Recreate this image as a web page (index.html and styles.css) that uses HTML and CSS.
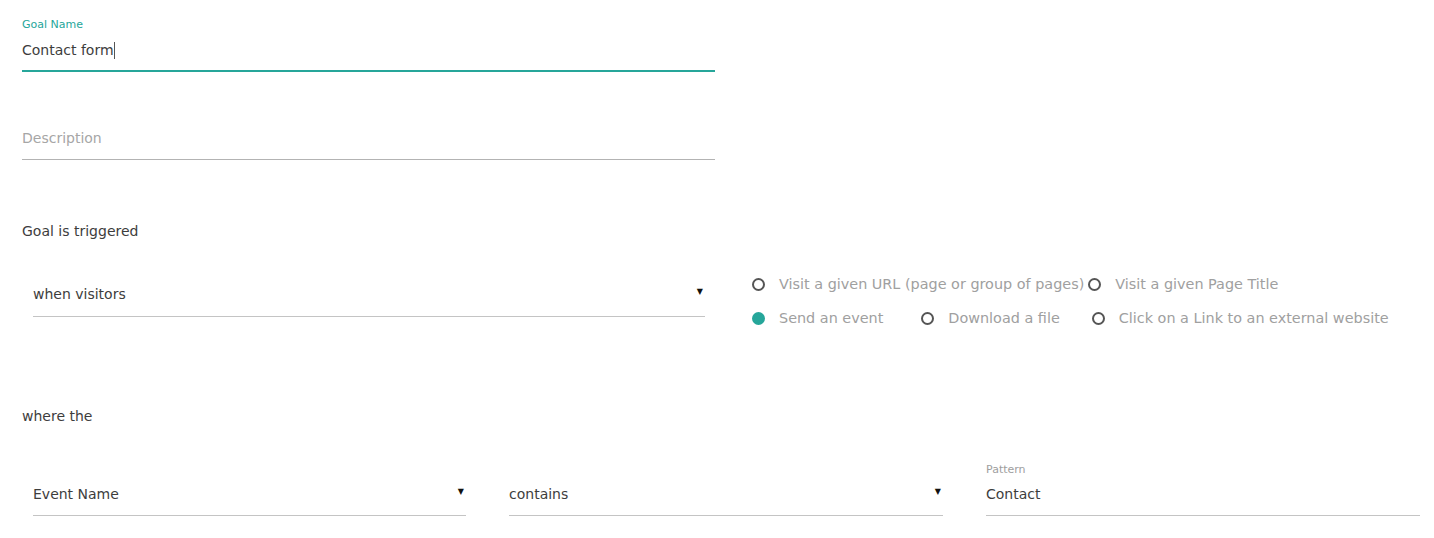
FILE: index.html
```html
<!DOCTYPE html>
<html>
<head>
<meta charset="utf-8">
<link rel="stylesheet" href="styles.css">
</head>
<body>
<div class="page">
  <div class="field field-name">
    <label class="flabel active">Goal Name</label>
    <div class="fvalue">Contact form<span class="caret"></span></div>
    <div class="line focus"></div>
  </div>

  <div class="field field-desc">
    <div class="fvalue placeholder">Description</div>
    <div class="line"></div>
  </div>

  <div class="section-title trig">Goal is triggered</div>

  <div class="trigger-row">
    <div class="select wide">
      <span class="sval">when visitors</span>
      <span class="arrow">▼</span>
    </div>
    <div class="radios">
      <div class="rrow">
        <span class="radio r-url"><span class="dot"></span>Visit a given URL (page or group of pages)</span>
        <span class="radio"><span class="dot"></span>Visit a given Page Title</span>
      </div>
      <div class="rrow">
        <span class="radio r-send"><span class="dot on"></span>Send an event</span>
        <span class="radio r-dl"><span class="dot"></span>Download a file</span>
        <span class="radio"><span class="dot"></span>Click on a Link to an external website</span>
      </div>
    </div>
  </div>

  <div class="section-title where">where the</div>

  <div class="cond-row">
    <div class="select">
      <span class="sval">Event Name</span>
      <span class="arrow">▼</span>
    </div>
    <div class="select">
      <span class="sval">contains</span>
      <span class="arrow">▼</span>
    </div>
    <div class="pattern">
      <label class="flabel">Pattern</label>
      <div class="select ptext">
        <span class="sval">Contact</span>
      </div>
    </div>
  </div>
</div>
</body>
</html>
```
FILE: styles.css
```css
* { box-sizing: border-box; }
html, body { margin: 0; padding: 0; background: #fff; }
body {
  font-family: "DejaVu Sans", Verdana, sans-serif;
  font-size: 14px;
  color: #3d3d3d;
  width: 1434px;
  height: 538px;
  overflow: hidden;
}
.page { padding: 18px 0 0 22px; }

.field { width: 693px; }
.flabel {
  display: block;
  font-size: 11px;
  line-height: 14px;
  color: #9e9e9e;
}
.flabel.active { color: #26a69a; }
.fvalue {
  font-size: 14px;
  line-height: 20px;
  color: #3d3d3d;
}
.field-name .fvalue { margin-top: 8px; height: 30px; }
.caret {
  display: inline-block;
  width: 1px;
  height: 17px;
  background: #555;
  vertical-align: -4px;
}
.placeholder { color: #a6a6a6; }
.line { height: 1px; background: #b3b3b3; }
.line.focus { height: 2px; background: #26a69a; }

.field-desc { margin-top: 56px; }
.field-desc .fvalue { height: 31px; }

.section-title { font-size: 14px; line-height: 20px; color: #3d3d3d; }
.trig { margin-top: 61px; }

.trigger-row {
  display: flex;
  align-items: flex-start;
  margin-top: 26px;
  padding-left: 11px;
}
.select {
  display: flex;
  align-items: center;
  justify-content: space-between;
  line-height: 20px;
  padding: 17px 0 11px;
  border-bottom: 1px solid #c4c4c4;
  font-size: 14px;
  color: #3d3d3d;
}
.select.wide { width: 672px; padding-bottom: 12px; }
.arrow { font-size: 8px; line-height: 20px; color: #111; padding-right: 2px; position: relative; top: -2px; }

.radios { margin-left: 47px; }
.rrow { display: flex; height: 34px; align-items: center; }
.radio {
  display: inline-flex;
  align-items: center;
  color: #a0a0a0;
  font-size: 14.4px;
  white-space: nowrap;
}
.r-url { margin-right: 4px; }
.r-send { margin-right: 38px; }
.r-dl { margin-right: 32px; }
.dot {
  width: 13px;
  height: 13px;
  border: 2px solid #555;
  border-radius: 50%;
  margin-right: 14px;
  flex: none;
}
.dot.on { background: #26a69a; border-color: #26a69a; }

.where { margin-top: 71px; }

.cond-row {
  display: grid;
  grid-template-columns: 433px 434px 434px;
  column-gap: 43px;
  padding-left: 11px;
  margin-top: 37px;
  align-items: end;
}
.pattern .flabel { margin-bottom: 7px; }
.ptext { padding-top: 0; }
```
